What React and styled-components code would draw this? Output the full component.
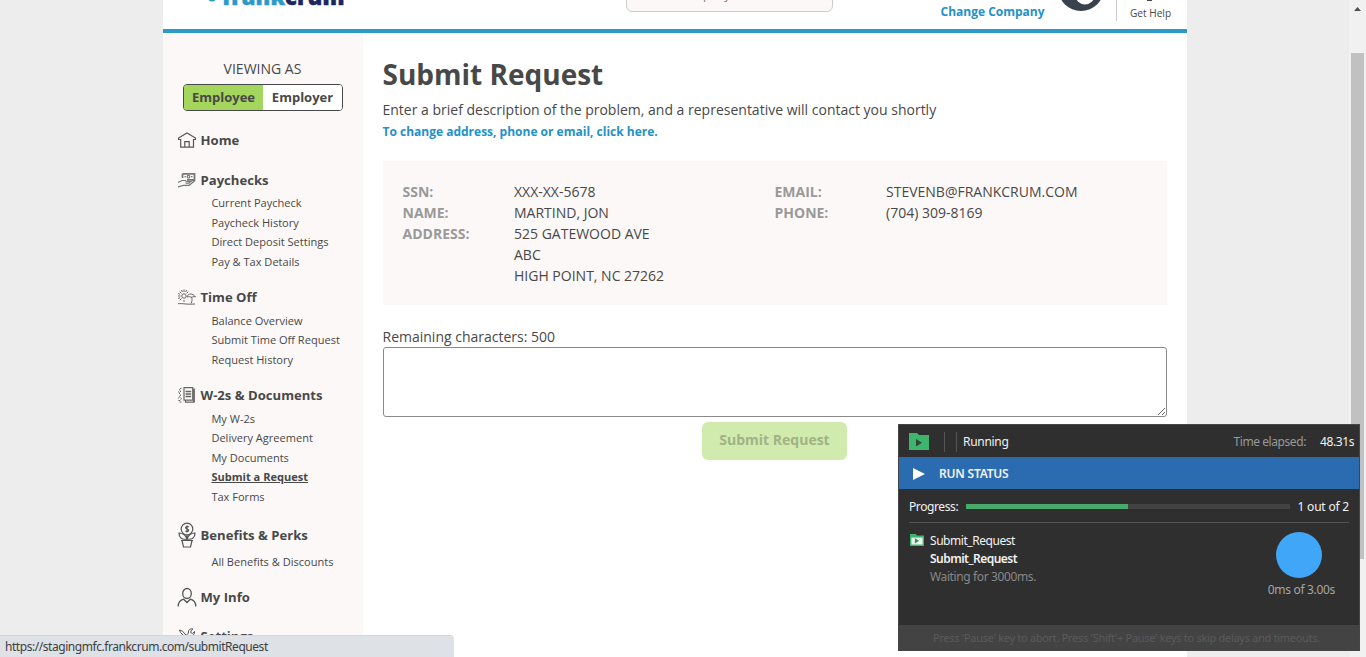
import React from 'react';
import styled, { createGlobalStyle } from 'styled-components';

const Global = createGlobalStyle`
  * { box-sizing: border-box; }
  html, body { margin: 0; height: 657px; overflow: hidden; background: #ededed; }
  body { font-family: "Open Sans", sans-serif; color: #484848; }
`;

const Screen = styled.div`
  display: flex;
  justify-content: space-between;
  height: 657px;
  overflow: hidden;
  padding-left: 163px;
`;
const Page = styled.div`
  width: 1024px;
  height: 657px;
  background: #fff;
  display: flex;
  flex-direction: column;
`;
const Header = styled.header`
  height: 33px;
  flex: none;
  border-bottom: 4px solid #2b9aca;
  display: flex;
  align-items: flex-start;
  overflow: hidden;
`;
const Logo = styled.div`
  width: 463px;
  height: 29px;
  padding-left: 45px;
  display: flex;
  font: 800 22px/22px "Open Sans", sans-serif;
  color: #1b2560;
  letter-spacing: 0.15px;
  margin-top: -15.5px;
  -webkit-text-stroke: 0.5px currentColor;
  span { color: #2b9aca; }
  svg { margin: 10px 5px 0 0; }
`;
const Search = styled.div`
  width: 207px;
  height: 30px;
  margin-top: -18px;
  border: 1px solid #ccc;
  border-radius: 6px;
  background: #fcf8f8;
  padding: 4px 50px;
  font-size: 12px;
  line-height: 16px;
  color: #777;
`;
const Change = styled.a`
  margin: 3px 0 0 107.5px;
  width: 117.5px;
  font-size: 12px;
  line-height: 18px;
  font-weight: 700;
  color: #2490c8;
  white-space: nowrap;
`;
const HeaderAvatar = styled.svg`
  flex: none;
  margin-right: 12px;
`;
const Help = styled.div`
  height: 21px;
  border-left: 1px solid #ccc;
  padding: 0 0 0 13px;
  font-size: 10.1px;
  line-height: 15px;
  white-space: nowrap;
  svg { display: block; margin: 0 0 2px 16px; }
`;

const Columns = styled.div`
  display: flex;
  flex: 1;
  min-height: 0;
`;
const Sidebar = styled.nav`
  width: 200px;
  background: #fcf8f8;
  overflow: hidden;
`;
const Viewing = styled.div`
  margin-top: 26px;
  text-align: center;
  font-size: 14px;
  line-height: 20px;
  padding-right: 1px;
`;
const Toggle = styled.div`
  margin: 5px 20px 0;
  height: 27px;
  display: flex;
  border: 1px solid #484848;
  border-radius: 4px;
  overflow: hidden;
  background: #fff;
`;
const ToggleItem = styled.div`
  flex: 1;
  text-align: center;
  font-weight: 700;
  font-size: 13px;
  line-height: 25px;
  background: ${p => (p.$on ? '#a4d55d' : '#fff')};
`;
const Group = styled.section`
  margin-top: ${p => p.$top}px;
`;
const GroupTitle = styled.div`
  display: flex;
  align-items: center;
  height: 20px;
  padding-left: 14px;
  font-size: 13.1px;
  font-weight: 700;
  line-height: 20px;
  white-space: nowrap;
  svg { flex: none; width: 20px; margin-right: 3.5px; overflow: visible; }
`;
const Links = styled.div`
  padding: ${p => p.$pad || 3}px 0 0 48.4px;
`;
const NavLink = styled.a`
  display: block;
  height: 19.6px;
  font-size: 11.05px;
  line-height: 19.6px;
  white-space: nowrap;
  font-weight: ${p => (p.$active ? 700 : 400)};
  text-decoration: ${p => (p.$active ? 'underline' : 'none')};
`;

const Main = styled.main`
  width: 824px;
  padding: 22px 20px 0;
`;
const Title = styled.h1`
  margin: 0 0 0 -0.5px;
  font-size: 28px;
  line-height: 38px;
  font-weight: 700;
`;
const Lead = styled.p`
  margin: 7px 0 0 -0.5px;
  font-size: 14px;
  line-height: 20px;
`;
const ChangeInfo = styled.a`
  display: block;
  margin: 3px 0 0 -0.5px;
  font-size: 12px;
  line-height: 18px;
  font-weight: 700;
  color: #2490c8;
`;
const InfoCard = styled.div`
  margin-top: 20px;
  height: 144px;
  background: #fcf8f8;
  padding: 20px 20px 20px 19.5px;
  display: grid;
  grid-template-columns: 372px 1fr;
  font-size: 14px;
  line-height: 21px;
`;
const InfoRow = styled.div`
  display: grid;
  grid-template-columns: 111.500px 1fr;
  b { color: #999; }
`;
const Remaining = styled.label`
  display: block;
  margin: 22px 0 0 -0.5px;
  font-size: 14px;
  line-height: 20px;
`;
const Area = styled.textarea`
  display: block;
  width: 784px;
  height: 70px;
  border: 1px solid #8a8a8a;
  border-radius: 3px;
  background: #fff;
`;
const Submit = styled.button`
  display: block;
  margin: 5px 0 0 319px;
  width: 145px;
  height: 38px;
  border: 0;
  border-radius: 6px;
  background: #d1eaae;
  color: #a1b286;
  font: 700 14px/36px "Open Sans", sans-serif;
  padding: 0 0 2px;
`;

const Scrollbar = styled.div`
  width: 17px;
  height: 657px;
  background: #f1f1f1;
  display: flex;
  flex-direction: column;
  align-items: center;
  svg { margin-top: 6px; }
`;
const Thumb = styled.div`
  width: 13px;
  height: 506px;
  margin-top: 42px;
  background: #c1c1c1;
`;

const StatusBar = styled.div`
  position: absolute;
  left: 0;
  bottom: 0;
  width: 454px;
  height: 22px;
  border-top: 1px solid #d4d7da;
  border-top-right-radius: 4px;
  background: #dee1e6;
  padding-left: 5px;
  font: 12px/22px "Noto Sans", sans-serif;
  color: #3c4043;
  letter-spacing: -0.45px;
`;

const Runner = styled.aside`
  position: absolute;
  left: 898px;
  top: 424px;
  width: 462px;
  height: 227px;
  border: 1px solid #454545;
  background: #2f2f2f;
  color: #f2f2f2;
  font: 12px/18px "Noto Sans", sans-serif;
  display: flex;
  flex-direction: column;
  white-space: nowrap;
`;
const RunnerTop = styled.div`
  height: 32px;
  display: flex;
  align-items: center;
  padding: 1px 5px 0 10px;
`;
const Divider = styled.i`
  width: 1px;
  height: 20px;
  background: #555;
  margin-left: ${p => p.$gap}px;
`;
const Fit = styled.span`
  letter-spacing: ${p => p.$ls || 0}px;
  color: ${p => p.$color || 'inherit'};
  font-weight: ${p => p.$weight || 400};
  margin-left: ${p => p.$left || 0}px;
`;
const Elapsed = styled(Fit)`
  margin-left: auto;
`;
const RunnerHead = styled.div`
  height: 32px;
  background: #2b6cb0;
  display: flex;
  align-items: center;
  padding: 1px 0 0 14px;
`;
const ProgressRow = styled.div`
  height: 34px;
  margin: 0 10px;
  border-bottom: 1px solid #555;
  display: flex;
  align-items: center;
  padding-top: 2px;
`;
const Track = styled.div`
  flex: 1;
  height: 5px;
  margin: 0 8px;
  background: #434343;
`;
const Fill = styled.div`
  width: 50%;
  height: 5px;
  background: #48ab6c;
`;
const RunnerBody = styled.div`
  flex: 1;
  display: flex;
  justify-content: space-between;
  padding: 9px 24px 0 11px;
`;
const Task = styled.div`
  display: grid;
  grid-template-columns: 20px 1fr;
  align-content: start;
  svg { margin-top: 2px; }
`;
const TaskText = styled.div`
  display: flex;
  flex-direction: column;
`;
const Timer = styled.div`
  display: flex;
  flex-direction: column;
  align-items: center;
  color: #a5a5a5;
`;
const Circle = styled.div`
  width: 46px;
  height: 46px;
  margin: 0 5px 3px 0;
  border-radius: 50%;
  background: #40a6f8;
`;
const RunnerFoot = styled.div`
  height: 25px;
  background: #434343;
  color: #5a5a5a;
  line-height: 25px;
  font-size: 11px;
  letter-spacing: -0.3px;
  padding-left: 34px;
`;

const strokeProps = { fill: 'none', stroke: '#555', strokeWidth: 1.2 };
const HomeIcon = () => (
  <svg width="20" height="16" viewBox="0 0 20 16" {...strokeProps}>
    <path d="M1.500 7.500V6L10 1l8.500 5v1.500h-2V15.200H3.700V7.500zM7.800 15V9.700h4.400V15" />
  </svg>
);
const PayIcon = () => (
  <svg width="20" height="16" viewBox="0 0 20 16" {...strokeProps} stroke="#777">
    <path d="M5.500 1.800h12v6H10M5.500 1.800V6" strokeWidth="1.800" />
    <circle cx="11.500" cy="4.700" r="1.300" />
    <path d="M7.500 4.700H9M14 4.700h1.500M1 10.500l4-2h3l2 1h2.500c1 1-.5 1.700-1.500 1.700H8.500M12 10.500l4.500-2.500c1.500 0 1 1.200.5 1.600l-5 3.700H6.500L1 14.800" />
  </svg>
);
const VacationIcon = () => (
  <svg width="20" height="16" viewBox="0 0 20 16" {...strokeProps} stroke="#666" strokeWidth="1">
    <circle cx="7" cy="7" r="2.200" />
    <path d="M7 .5v2.500M7 11v2M1 7h2.500M2.700 2.700l1.700 1.700M11.300 2.700L9.600 4.400M4.400 9.600l-1.700 1.700M4.500 1l.8 2M9.500 1l-.8 2M1 4.500l2 .8M1 9.500l2-.8M10 8c1-4 6-4 8.500 0-2-1-3 .2-4 .2S12 7 10 8zM14.500 8c1 2 .5 5-.5 6.500M1 14.700c5-.5 8 1 17 .3" />
  </svg>
);
const DocIcon = () => (
  <svg width="20" height="16" viewBox="0 0 20 16" {...strokeProps} stroke="#666">
    <path d="M7 .7h8.700v12.500H7zM8.500 13.500v1.700H17" />
    <path d="M17 1.500V15.500" strokeWidth="1.800" />
    <path d="M8.500 4.500h5.700M8.500 7h5.700M8.500 9.500h5.700" strokeWidth="1.400" />
    <path d="M4.500 1L2 2.500 4 4 2 6l2 2-2 1.500 2.500 2L3 13.500H1M4.500 15H2M1 5h1M1 11h1" strokeWidth="1" strokeDasharray="2 .7" />
  </svg>
);
const PlantIcon = () => (
  <svg width="20" height="26" viewBox="0 0 20 26" {...strokeProps}>
    <circle cx="10" cy="7" r="5.800" />
    <path d="M11.700 4.900c-2-1-3.500 0-3 1.200s2.800.8 3 2-1.700 1.800-3.200.8M10 3.500v7M10 13v6M2 11c5 0 7 3 8 6-5 1-8-1-8-6zM18 11c-5 0-7 3-8 6 5 1 8-1 8-6zM4 18.500h12M5 18.500L6.500 25h7l1.500-6.500" />
  </svg>
);
const PersonIcon = () => (
  <svg width="20" height="20" viewBox="0 0 20 20" {...strokeProps} strokeWidth="1.300">
    <ellipse cx="10" cy="6.500" rx="4.300" ry="5" />
    <path d="M1.200 19.500c0-5 2.500-6.500 5.500-7.300L10 15.500l3.300-3.300c3 .8 5.500 2.300 5.500 7.300" />
  </svg>
);
const ToolsIcon = () => (
  <svg width="20" height="18" viewBox="0 0 20 18" {...strokeProps} strokeWidth="1">
    <path d="M2.500 3l3 1.200 3.500 4M2.500 3l1 2.500 4 4M8 10l7 7M17.500 4.500L15.500 6.500l-1.700-.8.2-2L16 2c-3-.7-5 1-4.500 4L4 14c-1 2 1 3.500 2.500 2L14 8.500c2 .5 4-1.500 3.500-4z" />
  </svg>
);
const FolderPlay = ({ w, h, body, arrow }) => (
  <svg width={w} height={h} viewBox="0 0 20 17">
    <path d="M0 0h8l2 2h10v15H0z" fill="#3fb46c" />
    <path d="M2 5h16v10H2z" fill={body} />
    <path d="M7 6l6 3.700-6 3.800z" fill={arrow} />
  </svg>
);

const groups = [
  { title: 'Home', Icon: HomeIcon, top: 19 },
  { title: 'Paychecks', Icon: PayIcon, top: 20, links: ['Current Paycheck', 'Paycheck History', 'Direct Deposit Settings', 'Pay & Tax Details'] },
  { title: 'Time Off', Icon: VacationIcon, top: 15.6, pad: 3.8, links: ['Balance Overview', 'Submit Time Off Request', 'Request History'] },
  { title: 'W-2s & Documents', Icon: DocIcon, top: 15.4, pad: 3.7, links: ['My W-2s', 'Delivery Agreement', 'My Documents', 'Submit a Request', 'Tax Forms'] },
  { title: 'Benefits & Perks', Icon: PlantIcon, top: 18.3, pad: 7, links: ['All Benefits & Discounts'] },
  { title: 'My Info', Icon: PersonIcon, top: 15.4 },
  { title: 'Settings', Icon: ToolsIcon, top: 19 },
];

export default function App() {
  return (
    <>
      <Global />
      <Screen>
        <Page>
          <Header>
            <Logo>
              <svg width="9" height="10" viewBox="0 0 9 10"><circle cx="4" cy="2.500" r="4" fill="#2b9aca" /></svg>
              <span>frank</span>crum
            </Logo>
            <Search>Company</Search>
            <Change>Change Company</Change>
            <HeaderAvatar width="46" height="12" viewBox="0 0 46 12">
              <circle cx="23" cy="-12" r="23" fill="#39414d" />
              <circle cx="27" cy="-5" r="9.500" fill="#fff" />
            </HeaderAvatar>
            <Help>
              <svg width="7" height="4" viewBox="0 0 7 4"><path d="M1 0h5v1H1z" fill="#484848" /></svg>
              Get Help
            </Help>
          </Header>
          <Columns>
            <Sidebar>
              <Viewing>VIEWING AS</Viewing>
              <Toggle>
                <ToggleItem $on>Employee</ToggleItem>
                <ToggleItem>Employer</ToggleItem>
              </Toggle>
              {groups.map(({ title, Icon, top, pad, links }) => (
                <Group key={title} $top={top}>
                  <GroupTitle><Icon />{title}</GroupTitle>
                  {links && (
                    <Links $pad={pad}>
                      {links.map(l => <NavLink key={l} $active={l === 'Submit a Request'}>{l}</NavLink>)}
                    </Links>
                  )}
                </Group>
              ))}
            </Sidebar>
            <Main>
              <Title>Submit Request</Title>
              <Lead>Enter a brief description of the problem, and a representative will contact you shortly</Lead>
              <ChangeInfo>To change address, phone or email, click here.</ChangeInfo>
              <InfoCard>
                <div>
                  <InfoRow><b>SSN:</b><span>XXX-XX-5678</span></InfoRow>
                  <InfoRow><b>NAME:</b><span>MARTIND, JON</span></InfoRow>
                  <InfoRow><b>ADDRESS:</b><span>525 GATEWOOD AVE<br />ABC<br />HIGH POINT, NC 27262</span></InfoRow>
                </div>
                <div>
                  <InfoRow><b>EMAIL:</b><span>STEVENB@FRANKCRUM.COM</span></InfoRow>
                  <InfoRow><b>PHONE:</b><span>(704) 309-8169</span></InfoRow>
                </div>
              </InfoCard>
              <Remaining>Remaining characters: 500</Remaining>
              <Area />
              <Submit>Submit Request</Submit>
            </Main>
          </Columns>
        </Page>
        <Scrollbar>
          <svg width="7" height="5" viewBox="0 0 7 5"><path d="M0 5l3.500-4L7 5z" fill="#505050" /></svg>
          <Thumb />
        </Scrollbar>
      </Screen>
      <StatusBar>https://stagingmfc.frankcrum.com/submitRequest</StatusBar>
      <Runner>
        <RunnerTop>
          <FolderPlay w={20} h={17} body="#3fb46c" arrow="#2d4738" />
          <Divider $gap={15} />
          <Divider $gap={11} />
          <Fit $left={6} $ls={-0.3}>Running</Fit>
          <Elapsed $color="#999" $ls={-0.42}>Time elapsed:</Elapsed>
          <Fit $left={14} $ls={-0.4}>48.31s</Fit>
        </RunnerTop>
        <RunnerHead>
          <svg width="12" height="12" viewBox="0 0 12 12"><path d="M0 0l12 6-12 6z" fill="#fff" /></svg>
          <Fit $left={14} $weight={600} $ls={-0.2}>RUN STATUS</Fit>
        </RunnerHead>
        <ProgressRow>
          <Fit $ls={-0.4}>Progress:</Fit>
          <Track><Fill /></Track>
          <Fit $ls={-0.2}>1 out of 2</Fit>
        </ProgressRow>
        <RunnerBody>
          <Task>
            <FolderPlay w={14} h={12} body="#e6f7ec" arrow="#3c8a5a" />
            <TaskText>
              <Fit $ls={-0.45}>Submit_Request</Fit>
              <Fit $weight={600} $ls={-0.52}>Submit_Request</Fit>
              <Fit $color="#888" $ls={-0.38}>Waiting for 3000ms.</Fit>
            </TaskText>
          </Task>
          <Timer>
            <Circle />
            <Fit $ls={-0.32}>0ms of 3.00s</Fit>
          </Timer>
        </RunnerBody>
        <RunnerFoot>Press 'Pause' key to abort. Press 'Shift'+ Pause' keys to skip delays and timeouts.</RunnerFoot>
      </Runner>
    </>
  );
}
